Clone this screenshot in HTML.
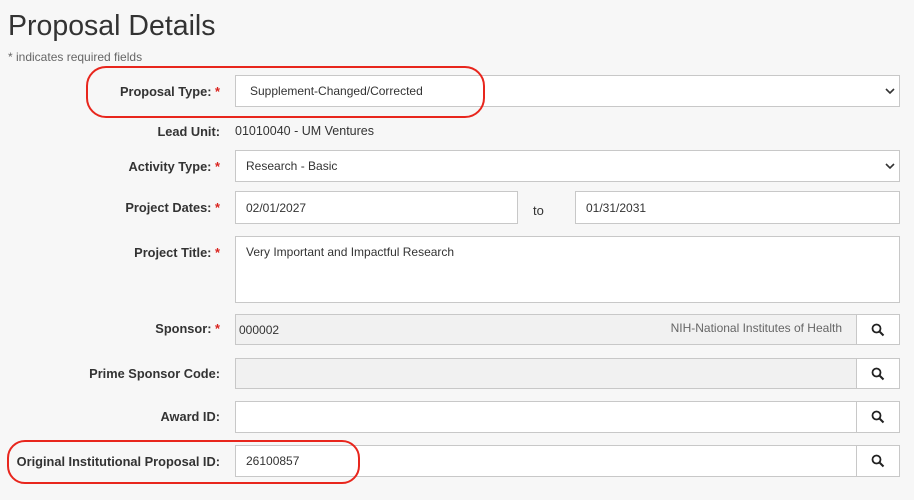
<!DOCTYPE html>
<html><head><style>
body{margin:0;width:914px;height:500px;background:#f7f7f7;font-family:"Liberation Sans",sans-serif;position:relative;overflow:hidden;color:#333}
.a{position:absolute}
h1{position:absolute;left:8px;top:10px;margin:0;font-size:28.5px;font-weight:normal;color:#333}
.sub{left:8px;top:50px;font-size:12px;color:#666}
.l{position:absolute;right:694px;font-size:12.8px;font-weight:bold;color:#333;white-space:nowrap}
.r{color:#d9231e}
.box{position:absolute;background:#fff;border:1px solid #c8c8c8;box-sizing:border-box;font-size:12px;color:#333;padding-left:10px;display:flex;align-items:center}
.g{background:#f1f1f1}
.btn{position:absolute;left:856px;width:44px;background:#fff;border:1px solid #c8c8c8;box-sizing:border-box;display:flex;align-items:center;justify-content:center}
.ov{position:absolute;border:2.5px solid #e8261d;border-radius:18px}
</style></head><body>
<h1>Proposal Details</h1>
<div class="a sub">* indicates required fields</div>

<div class="l" style="top:84px">Proposal Type: <span class="r">*</span></div>
<div class="box" style="left:235px;top:75px;width:665px;height:32px;padding-left:14px">Supplement-Changed/Corrected<svg class="a" style="right:4px;top:11px" width="10" height="8" viewBox="0 0 10 8"><path d="M1 2l4 4 4-4" fill="none" stroke="#333" stroke-width="1.6"/></svg></div>

<div class="l" style="top:124px">Lead Unit:</div>
<div class="a" style="left:235px;top:124px;font-size:12.5px">01010040 - UM Ventures</div>

<div class="l" style="top:159px">Activity Type: <span class="r">*</span></div>
<div class="box" style="left:235px;top:150px;width:665px;height:32px">Research - Basic<svg class="a" style="right:4px;top:11px" width="10" height="8" viewBox="0 0 10 8"><path d="M1 2l4 4 4-4" fill="none" stroke="#333" stroke-width="1.6"/></svg></div>

<div class="l" style="top:200px">Project Dates: <span class="r">*</span></div>
<div class="box" style="left:235px;top:191px;width:283px;height:33px">02/01/2027</div>
<div class="a" style="left:533px;top:203px;font-size:13px">to</div>
<div class="box" style="left:575px;top:191px;width:325px;height:33px">01/31/2031</div>

<div class="l" style="top:245px">Project Title: <span class="r">*</span></div>
<div class="box" style="left:235px;top:236px;width:665px;height:67px;align-items:flex-start;padding-top:8px">Very Important and Impactful Research</div>

<div class="l" style="top:321px">Sponsor: <span class="r">*</span></div>
<div class="box g" style="left:235px;top:314px;width:622px;height:31px;padding-left:3px">000002<span class="a" style="right:14px;top:6px;color:#666">NIH-National Institutes of Health</span></div>
<div class="btn" style="top:314px;height:31px"><svg width="14" height="14" viewBox="0 0 14 14"><circle cx="5.5" cy="5.5" r="4" fill="none" stroke="#222" stroke-width="1.8"/><path d="M8.5 8.5l4 4" stroke="#222" stroke-width="2"/></svg></div>

<div class="l" style="top:366px">Prime Sponsor Code:</div>
<div class="box g" style="left:235px;top:358px;width:622px;height:31px"></div>
<div class="btn" style="top:358px;height:31px"><svg width="14" height="14" viewBox="0 0 14 14"><circle cx="5.5" cy="5.5" r="4" fill="none" stroke="#222" stroke-width="1.8"/><path d="M8.5 8.5l4 4" stroke="#222" stroke-width="2"/></svg></div>

<div class="l" style="top:409px">Award ID:</div>
<div class="box" style="left:235px;top:401px;width:622px;height:32px"></div>
<div class="btn" style="top:401px;height:32px"><svg width="14" height="14" viewBox="0 0 14 14"><circle cx="5.5" cy="5.5" r="4" fill="none" stroke="#222" stroke-width="1.8"/><path d="M8.5 8.5l4 4" stroke="#222" stroke-width="2"/></svg></div>

<div class="l" style="top:454px">Original Institutional Proposal ID:</div>
<div class="box" style="left:235px;top:445px;width:622px;height:32px">26100857</div>
<div class="btn" style="top:445px;height:32px"><svg width="14" height="14" viewBox="0 0 14 14"><circle cx="5.5" cy="5.5" r="4" fill="none" stroke="#222" stroke-width="1.8"/><path d="M8.5 8.5l4 4" stroke="#222" stroke-width="2"/></svg></div>

<div class="ov" style="left:86px;top:66px;width:395px;height:48px;border-radius:20px"></div>
<div class="ov" style="left:7px;top:440px;width:349px;height:40px;border-radius:18px"></div>
</body></html>
